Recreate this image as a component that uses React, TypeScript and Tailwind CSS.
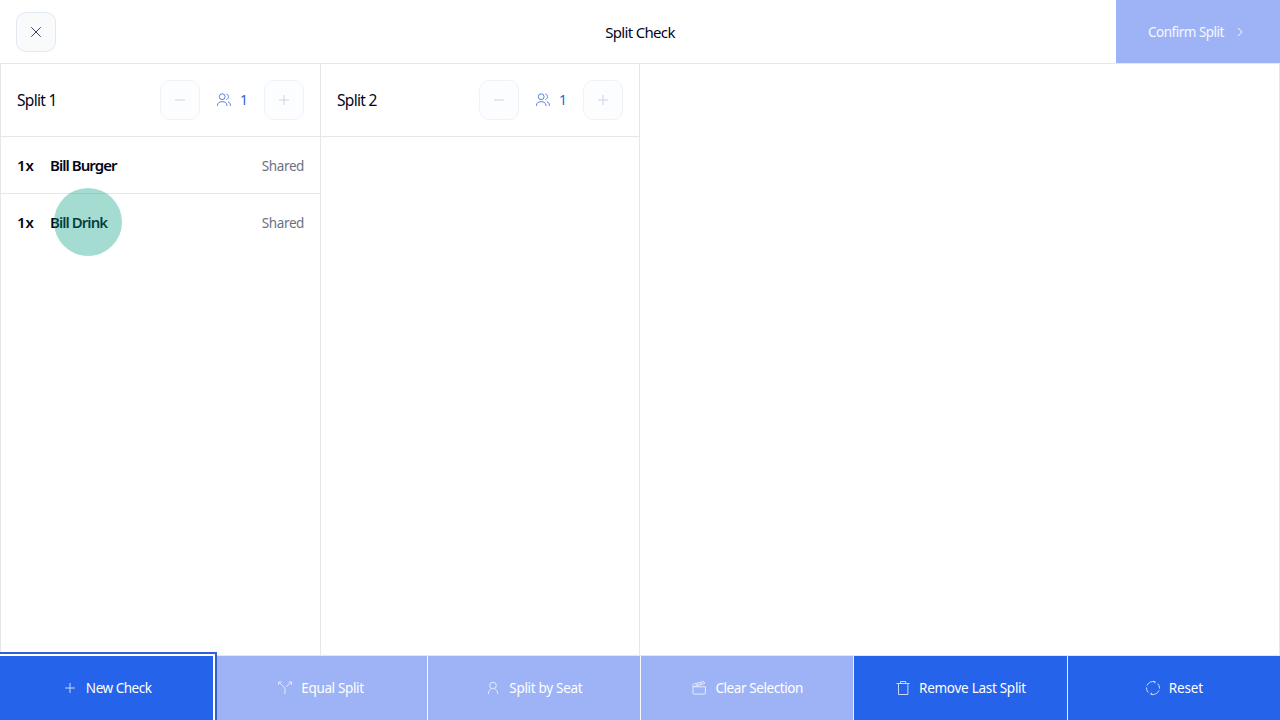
import { useState, type ReactNode } from 'react';
import clsx from 'clsx';

interface Item {
  id: number;
  qty: number;
  name: string;
  note: string;
}

interface Split {
  id: number;
  guests: number;
  items: Item[];
}

const SPLITS: Split[] = [
  {
    id: 1,
    guests: 1,
    items: [
      { id: 1, qty: 1, name: 'Bill Burger', note: 'Shared' },
      { id: 2, qty: 1, name: 'Bill Drink', note: 'Shared' },
    ],
  },
  { id: 2, guests: 1, items: [] },
];

// Thin line icons on a 16px grid
function Icon({ children, className }: { children: ReactNode; className?: string }) {
  return (
    <svg viewBox="0 0 16 16" fill="none" stroke="currentColor" strokeWidth="1" strokeLinejoin="round" className={clsx('size-4 shrink-0', className)}>
      {children}
    </svg>
  );
}

const CloseIcon = () => <Icon><path d="M3.3 3.3l9.4 9.4M12.7 3.3l-9.4 9.4" /></Icon>;
const MinusIcon = () => <Icon><path d="M3 8h10" /></Icon>;
const PlusIcon = () => <Icon><path d="M8 3v10M3 8h10" /></Icon>;
const ChevronIcon = () => <Icon><path d="M6 4l4 4-4 4" /></Icon>;
const UsersIcon = () => (
  <Icon className="opacity-80">
    <circle cx="6.2" cy="4.7" r="2.9" />
    <path d="M1.5 14v-.8c0-2.3 1.9-3.5 4.7-3.5s4.7 1.2 4.7 3.5v.8M10.4 2c2.7.4 2.7 5 0 5.5M12 9.8c1.5.5 2.4 1.7 2.4 3.4v.8" />
  </Icon>
);
const ForkIcon = () => (
  <Icon>
    <path d="M8 14V9.8c0-2.4-1.6-3.2-3-4.5L2 2.2M1.7 4.8V2h2.8M9 6.8c.4-.6 1.2-1 2-1.7l3.2-2.9M11.7 2h2.8v2.8" />
  </Icon>
);
const SeatIcon = () => (
  <Icon>
    <circle cx="8" cy="5.5" r="3.3" />
    <path d="M3.5 14v-.8c0-1.8 1-3.4 2.6-4.4M12.5 14v-.8c0-1.8-1-3.4-2.6-4.4" />
  </Icon>
);
const ClapperIcon = () => (
  <Icon>
    <path d="M2 6.8h12.4v6.2a1.1 1.1 0 0 1-1.1 1.1H3.1A1.1 1.1 0 0 1 2 13zM2 6.8l-.3-1.2c-.1-.8.2-1.3 1-1.5L12 1.7c.8-.2 1.3.1 1.5.8l.2.9L3 6.5M5 3.6l2 1.7M8.7 2.6l2 1.7" />
  </Icon>
);
const TrashIcon = () => (
  <Icon>
    <path d="M1.4 3.5h13.2M3.5 3.5v11h9.4v-11M5.5 3.5v-2h5.2v2" />
  </Icon>
);
const ResetIcon = () => (
  <Icon>
    <path d="M10.3 1.9A6.5 6.5 0 0 0 2 5.6M8.6 1.2l1.7.7-1 1.5" />
    <path d="M1.5 7.4a6.5 6.5 0 0 0 1.8 5.1M5.7 14.1a6.5 6.5 0 0 0 8.3-3.7M7.4 14.8l-1.7-.7 1-1.5" />
    <path d="M14.5 8.6a6.5 6.5 0 0 0-1.8-5.1" />
  </Icon>
);

const ACTIONS = [
  { label: 'New Check', icon: PlusIcon, disabled: false, tracking: 'tracking-[-0.48px]' },
  { label: 'Equal Split', icon: ForkIcon, disabled: true, tracking: 'tracking-[-0.36px]' },
  { label: 'Split by Seat', icon: SeatIcon, disabled: true, tracking: 'tracking-[-0.3px]' },
  { label: 'Clear Selection', icon: ClapperIcon, disabled: true, tracking: 'tracking-[-0.42px]' },
  { label: 'Remove Last Split', icon: TrashIcon, disabled: false, tracking: 'tracking-[-0.28px]' },
  { label: 'Reset', icon: ResetIcon, disabled: false, tracking: 'tracking-[-0.15px]' },
];

function SquareButton({ children, disabled, label }: { children: ReactNode; disabled?: boolean; label: string }) {
  return (
    <button
      aria-label={label}
      disabled={disabled}
      className="flex size-10 items-center justify-center rounded-[10px] border border-[#e2e8f0] bg-[#f8fafc] text-slate-700 disabled:border-[#eef3fa] disabled:bg-[#fcfdff] disabled:text-[#c8d1e6]"
    >
      {children}
    </button>
  );
}

function SplitColumn({ split }: { split: Split }) {
  return (
    <section className="flex flex-col border-r border-gray-200">
      <header className="flex h-[73px] items-center justify-between border-b border-gray-200 px-4">
        <h2 className="pt-0.5 text-[15.5px] tracking-[-0.68px] text-slate-950">Split {split.id}</h2>
        <div className="flex items-center">
          <SquareButton label="Remove guest" disabled><MinusIcon /></SquareButton>
          <div className="flex w-16 items-center justify-center gap-2 text-sm text-[#2f60d8]">
            <UsersIcon />
            <span>{split.guests}</span>
          </div>
          <SquareButton label="Add guest" disabled><PlusIcon /></SquareButton>
        </div>
      </header>
      <ul>
        {split.items.map(item => (
          <li key={item.id} className="flex h-[57px] items-center border-b border-gray-200 px-4 last:border-transparent">
            <span className="w-[33px] pt-px text-[15px] font-semibold tracking-[-0.2px] text-slate-950">{item.qty}x</span>
            <span className="pt-px text-[15px] font-semibold tracking-[-0.95px] text-slate-950">{item.name}</span>
            <span className="ml-auto pt-0.5 text-[13.5px] tracking-[-0.4px] text-gray-500">{item.note}</span>
          </li>
        ))}
      </ul>
    </section>
  );
}

export default function App() {
  const [splits] = useState(SPLITS);

  return (
    <div className="relative flex h-screen flex-col overflow-hidden bg-white font-['Noto_Sans',sans-serif]">
      <header className="grid h-16 shrink-0 grid-cols-[1fr_auto_1fr] items-center border-b border-gray-200">
        <div className="pl-4">
          <SquareButton label="Close"><CloseIcon /></SquareButton>
        </div>
        <h1 className="pt-0.5 text-[15px] tracking-[-0.68px] text-slate-950">Split Check</h1>
        <button disabled className="flex h-full w-[164px] items-center gap-2 justify-self-end bg-[#9db3f6] pl-8 text-[13.5px] text-white/90">
          <span className="w-[76px] pt-px tracking-[-0.5px] whitespace-nowrap">Confirm Split</span>
          <ChevronIcon />
        </button>
      </header>

      <main className="grid flex-1 grid-cols-[320px_319px_1fr] border-r border-l border-gray-200">
        {splits.map(split => <SplitColumn key={split.id} split={split} />)}
      </main>

      <footer className="grid h-[65px] shrink-0 grid-cols-6 border-t border-gray-200">
        {ACTIONS.map(({ label, icon: ActionIcon, disabled, tracking }, i) => (
          <button
            key={label}
            disabled={disabled}
            className={clsx(
              'flex items-center justify-center gap-2 text-[13.5px] text-white',
              disabled ? 'bg-[#9db3f6]' : 'bg-[#2563eb]',
              i === 0 ? 'relative z-10 ring-2 ring-[#2f60d8] ring-offset-2' : 'border-l border-white/90',
            )}
          >
            <span className="opacity-75"><ActionIcon /></span>
            <span className={clsx('pt-px', tracking)}>{label}</span>
          </button>
        ))}
      </footer>

      {/* touch indicator */}
      <div className="pointer-events-none absolute top-[188px] left-[54px] size-[68px] rounded-full bg-[#0c9f81]/37" />
    </div>
  );
}
